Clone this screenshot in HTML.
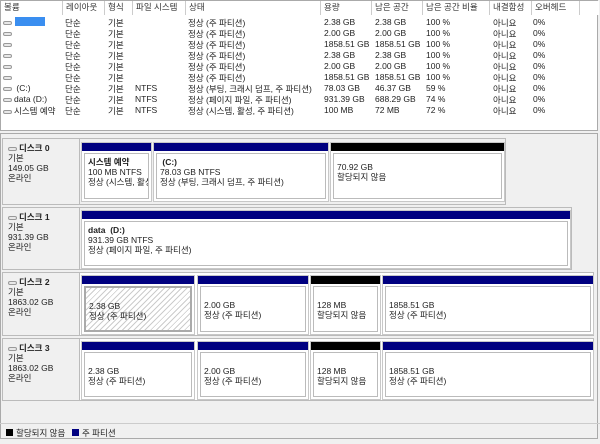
<!DOCTYPE html>
<html><head><meta charset="utf-8"><style>
*{margin:0;padding:0;box-sizing:border-box}
body{width:600px;height:444px;background:#f0f0f0;font-family:"Liberation Sans","Noto Sans CJK KR",sans-serif;font-size:8.5px;color:#222;position:relative;overflow:hidden}
.a{position:absolute;white-space:nowrap}
#list{position:absolute;left:0;top:0;width:598px;height:131px;background:#fff;border:1px solid #aaa}
.h{position:absolute;top:0;height:14px;border-right:1px solid #ccc;padding-left:3px;line-height:13px;color:#333;background:#fff}
.ico{display:inline-block;width:9px;height:4px;border:1px solid #999;border-radius:2px;background:#e8e8e8;vertical-align:middle;margin-right:2px}
.disk{position:absolute;left:2px;width:592px;background:#fff;border:1px solid #bbb}
.lbl{position:absolute;left:0;top:0;width:77px;height:100%;background:#f0f0f0;border-right:1px solid #bbb;padding:4px 0 0 5px;line-height:10px}
.lbl b{font-weight:bold}
.p{position:absolute;border:1px solid #c8c8c8;background:#fff}
.bar{position:absolute;left:0;top:0;right:0;height:8px;background:#000080}
.bar.k{background:#000}
.in{position:absolute;left:2px;right:2px;top:10px;bottom:2px;border:1px solid #bbb;padding:3px 0 0 3px;line-height:10px;overflow:hidden;white-space:nowrap}
.hat{background:repeating-linear-gradient(135deg,#fff 0 3px,#ccc 3px 4px)}
</style></head><body>
<div id="list">
<div class="h" style="left:0;width:62px">볼륨</div>
<div class="h" style="left:62px;width:42px">레이아웃</div>
<div class="h" style="left:104px;width:28px">형식</div>
<div class="h" style="left:132px;width:53px">파일 시스템</div>
<div class="h" style="left:185px;width:135px">상태</div>
<div class="h" style="left:320px;width:51px">용량</div>
<div class="h" style="left:371px;width:51px">남은 공간</div>
<div class="h" style="left:422px;width:67px">남은 공간 비율</div>
<div class="h" style="left:489px;width:42px">내결함성</div>
<div class="h" style="left:531px;width:48px">오버헤드</div>
<div class="h" style="left:579px;width:19px;border-right:none"></div>
</div>
<div class="a" style="left:15px;top:17px;width:30px;height:9px;background:#3a8ef0"></div>
<div id="rows"></div>
<script>
var r=[["","2.38 GB","2.38 GB","100 %","","정상 (주 파티션)"],["","2.00 GB","2.00 GB","100 %","","정상 (주 파티션)"],["","1858.51 GB","1858.51 GB","100 %","","정상 (주 파티션)"],["","2.38 GB","2.38 GB","100 %","","정상 (주 파티션)"],["","2.00 GB","2.00 GB","100 %","","정상 (주 파티션)"],["","1858.51 GB","1858.51 GB","100 %","","정상 (주 파티션)"],[" (C:)","78.03 GB","46.37 GB","59 %","NTFS","정상 (부팅, 크래시 덤프, 주 파티션)"],["data (D:)","931.39 GB","688.29 GB","74 %","NTFS","정상 (페이지 파일, 주 파티션)"],["시스템 예약","100 MB","72 MB","72 %","NTFS","정상 (시스템, 활성, 주 파티션)"]];
var h="";r.forEach(function(x,i){var y=17+i*11;
h+='<div class="a" style="left:3px;top:'+y+'px"><span class="ico"></span>'+x[0]+'</div>';
h+='<div class="a" style="left:65px;top:'+y+'px">단순</div><div class="a" style="left:108px;top:'+y+'px">기본</div>';
h+='<div class="a" style="left:135px;top:'+y+'px">'+x[4]+'</div><div class="a" style="left:188px;top:'+y+'px">'+x[5]+'</div>';
h+='<div class="a" style="left:324px;top:'+y+'px">'+x[1]+'</div><div class="a" style="left:375px;top:'+y+'px">'+x[2]+'</div>';
h+='<div class="a" style="left:426px;top:'+y+'px">'+x[3]+'</div><div class="a" style="left:493px;top:'+y+'px">아니요</div><div class="a" style="left:533px;top:'+y+'px">0%</div>';});
document.getElementById("rows").innerHTML=h;
</script>
<div class="a" style="left:0;top:133px;width:598px;height:306px;border:1px solid #aaa;background:#f0f0f0"></div>

<div class="disk" style="top:138px;height:67px;width:504px;background:#f0f0f0">
<div class="lbl"><span class="ico"></span><b>디스크 0</b><br>기본<br>149.05 GB<br>온라인</div>
<div class="p" style="left:78px;top:3px;width:71px;height:60px"><div class="bar"></div><div class="in"><b>시스템 예약</b><br>100 MB NTFS<br>정상 (시스템, 활성</div></div>
<div class="p" style="left:150px;top:3px;width:176px;height:60px"><div class="bar"></div><div class="in"><b>&nbsp;(C:)</b><br>78.03 GB NTFS<br>정상 (부팅, 크래시 덤프, 주 파티션)</div></div>
<div class="p" style="left:327px;top:3px;width:175px;height:60px"><div class="bar k"></div><div class="in" style="padding-top:8px">70.92 GB<br>할당되지 않음</div></div>
</div>

<div class="disk" style="top:207px;height:63px;width:570px;background:#f0f0f0">
<div class="lbl"><span class="ico"></span><b>디스크 1</b><br>기본<br>931.39 GB<br>온라인</div>
<div class="p" style="left:78px;top:2px;width:490px;height:59px"><div class="bar"></div><div class="in"><b>data&nbsp; (D:)</b><br>931.39 GB NTFS<br>정상 (페이지 파일, 주 파티션)</div></div>
</div>

<div class="disk" style="top:272px;height:64px">
<div class="lbl"><span class="ico"></span><b>디스크 2</b><br>기본<br>1863.02 GB<br>온라인</div>
<div class="p" style="left:78px;top:2px;width:114px;height:60px"><div class="bar"></div><div class="in hat" style="padding-top:13px;border:2px solid #aaa">2.38 GB<br>정상 (주 파티션)</div></div>
<div class="p" style="left:194px;top:2px;width:112px;height:60px"><div class="bar"></div><div class="in" style="padding-top:13px">2.00 GB<br>정상 (주 파티션)</div></div>
<div class="p" style="left:307px;top:2px;width:71px;height:60px"><div class="bar k"></div><div class="in" style="padding-top:13px">128 MB<br>할당되지 않음</div></div>
<div class="p" style="left:379px;top:2px;width:212px;height:60px"><div class="bar"></div><div class="in" style="padding-top:13px">1858.51 GB<br>정상 (주 파티션)</div></div>
</div>

<div class="disk" style="top:338px;height:63px">
<div class="lbl"><span class="ico"></span><b>디스크 3</b><br>기본<br>1863.02 GB<br>온라인</div>
<div class="p" style="left:78px;top:2px;width:114px;height:59px"><div class="bar"></div><div class="in" style="padding-top:13px">2.38 GB<br>정상 (주 파티션)</div></div>
<div class="p" style="left:194px;top:2px;width:112px;height:59px"><div class="bar"></div><div class="in" style="padding-top:13px">2.00 GB<br>정상 (주 파티션)</div></div>
<div class="p" style="left:307px;top:2px;width:71px;height:59px"><div class="bar k"></div><div class="in" style="padding-top:13px">128 MB<br>할당되지 않음</div></div>
<div class="p" style="left:379px;top:2px;width:212px;height:59px"><div class="bar"></div><div class="in" style="padding-top:13px">1858.51 GB<br>정상 (주 파티션)</div></div>
</div>

<div class="a" style="left:0;top:423px;width:600px;height:1px;background:#ccc"></div>
<div class="a" style="left:6px;top:429px;width:7px;height:7px;background:#000"></div>
<div class="a" style="left:16px;top:427px">할당되지 않음</div>
<div class="a" style="left:72px;top:429px;width:7px;height:7px;background:#000080"></div>
<div class="a" style="left:82px;top:427px">주 파티션</div>
</body></html>
